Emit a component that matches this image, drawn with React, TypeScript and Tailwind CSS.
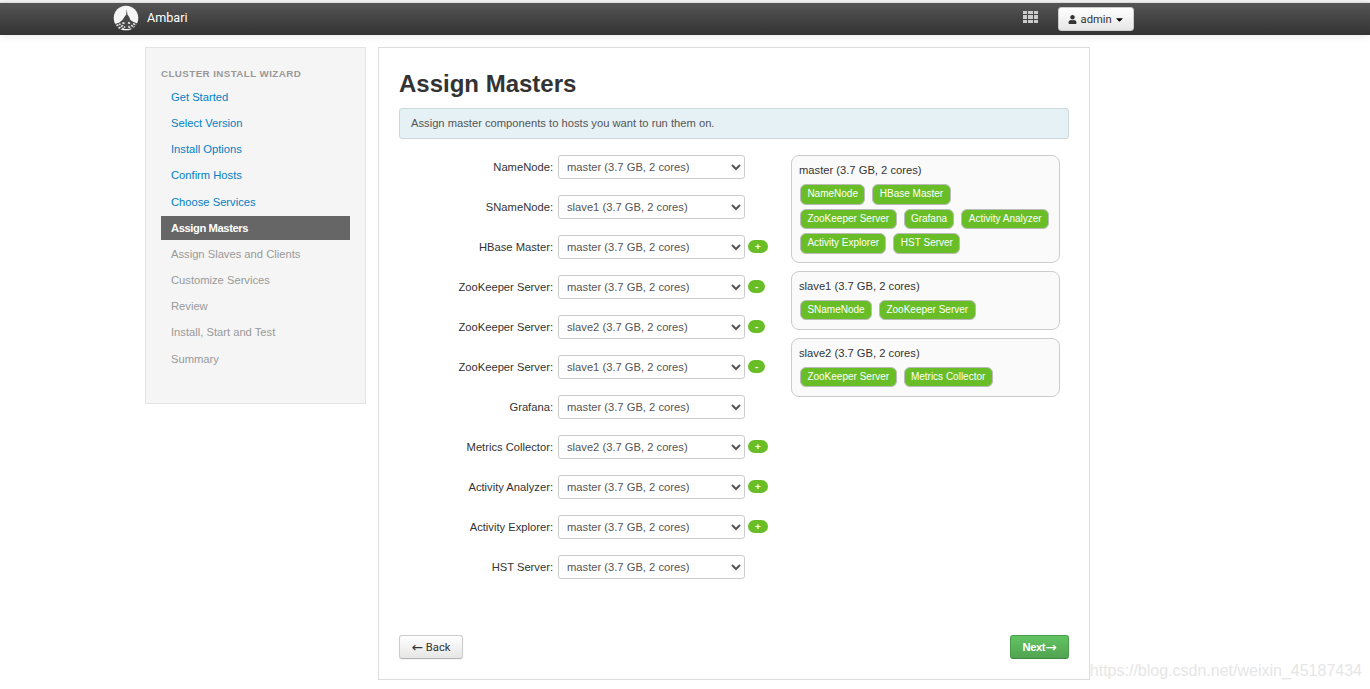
import React, { useState } from "react";
import { FaUser, FaCaretDown } from "react-icons/fa";

interface Step {
  name: string;
  state: "done" | "active" | "disabled";
}

interface MasterRow {
  label: string;
  host: string;
  action?: "+" | "-";
}

interface HostCard {
  host: string;
  components: string[];
}

const steps: Step[] = [
  { name: "Get Started", state: "done" },
  { name: "Select Version", state: "done" },
  { name: "Install Options", state: "done" },
  { name: "Confirm Hosts", state: "done" },
  { name: "Choose Services", state: "done" },
  { name: "Assign Masters", state: "active" },
  { name: "Assign Slaves and Clients", state: "disabled" },
  { name: "Customize Services", state: "disabled" },
  { name: "Review", state: "disabled" },
  { name: "Install, Start and Test", state: "disabled" },
  { name: "Summary", state: "disabled" },
];

const stepStyles = {
  done: "text-[#0080c4]",
  active: "bg-[#666666] font-bold tracking-[-0.4px] text-white",
  disabled: "text-[#999999]",
};

const hosts = ["master", "slave1", "slave2"];

const initialRows: MasterRow[] = [
  { label: "NameNode", host: "master" },
  { label: "SNameNode", host: "slave1" },
  { label: "HBase Master", host: "master", action: "+" },
  { label: "ZooKeeper Server", host: "master", action: "-" },
  { label: "ZooKeeper Server", host: "slave2", action: "-" },
  { label: "ZooKeeper Server", host: "slave1", action: "-" },
  { label: "Grafana", host: "master" },
  { label: "Metrics Collector", host: "slave2", action: "+" },
  { label: "Activity Analyzer", host: "master", action: "+" },
  { label: "Activity Explorer", host: "master", action: "+" },
  { label: "HST Server", host: "master" },
];

const hostCards: HostCard[] = [
  {
    host: "master",
    components: [
      "NameNode",
      "HBase Master",
      "ZooKeeper Server",
      "Grafana",
      "Activity Analyzer",
      "Activity Explorer",
      "HST Server",
    ],
  },
  { host: "slave1", components: ["SNameNode", "ZooKeeper Server"] },
  { host: "slave2", components: ["ZooKeeper Server", "Metrics Collector"] },
];

const hostText = (host: string) => `${host} (3.7 GB, 2 cores)`;

const Logo = () => (
  <svg width="26" height="26" viewBox="0 0 26 26" className="-mt-0.5">
    <circle cx="13" cy="13" r="12.3" fill="#f6f6f6" />
    <path
      d="M13.8 4 L14.4 9.5 L16.2 12 L17.4 15 L20 16.8 L24.4 18.6 A12.7 12.7 0 0 1 20 24 L6 24 A12.7 12.7 0 0 1 1.8 19 L6 17.8 L9.4 15 L11 12.4 L13.2 9.5 Z"
      fill="#484848"
    />
    <path
      d="M3.4 20.6 L7.6 19 M5.6 23.4 L10.4 20 M9.4 17.8 L12 18.6 M15 17.8 L17.6 18.4 M9 24.6 L12 21.6 M15.4 21.4 L18 24 M18 20.4 L21.4 22 M20 18.8 L23 19.6"
      stroke="#eeeeee"
      strokeWidth="1.5"
      strokeDasharray="2.2 0.7"
      fill="none"
    />
  </svg>
);

const Navbar = () => (
  <header className="h-[35px] border-t-2 border-[#f5f5f5] font-['Roboto',sans-serif]">
    <div className="flex h-[33px] items-center border-t border-[#dddddd] bg-linear-to-b from-[#555555] to-[#333333] pl-[113px] shadow-[0_1px_8px_rgba(0,0,0,0.1)]">
      <Logo />
      <span className="-mt-0.5 ml-2 w-[41px] text-[12.6px] text-white">Ambari</span>
      <div className="-mt-1 ml-[835px] grid grid-cols-3 gap-px">
        {Array.from({ length: 9 }, (_, i) => (
          <span key={i} className="h-[3.3px] w-[4.4px] bg-[#cccccc]" />
        ))}
      </div>
      <button className="ml-5 flex h-6 w-[76px] items-center justify-center rounded-[3px] border border-[#cccccc] bg-linear-to-b from-white to-[#e6e6e6] text-[11.2px] text-[#333333]">
        <FaUser className="mr-1 text-[9px]" />
        <span className="pt-0.5">admin</span>
        <FaCaretDown className="ml-0.5 text-[11px] text-black" />
      </button>
    </div>
  </header>
);

const Sidebar = () => (
  <aside className="h-[357px] w-[221px] shrink-0 border border-[#e3e3e3] bg-[#f5f5f5] px-[15px] pt-[17px]">
    <h3 className="h-[19.8px] text-[9.8px] leading-[17px] font-bold tracking-[0.4px] text-[#999999]">
      CLUSTER INSTALL WIZARD
    </h3>
    <ul className="flex flex-col gap-[2.2px]">
      {steps.map((step) => (
        <li
          key={step.name}
          className={`h-6 w-[189px] pl-2.5 leading-6 ${stepStyles[step.state]}`}
        >
          {step.name}
        </li>
      ))}
    </ul>
  </aside>
);

const HostPanel = ({ card }: { card: HostCard }) => (
  <div className="min-h-[59px] rounded-[8px] border border-[#cccccc] bg-[#fafafa] pt-1.5 pr-2 pb-2 pl-[7px]">
    <div className="h-[22px] leading-4">{hostText(card.host)}</div>
    <div className="flex flex-wrap gap-x-[7px] gap-y-1 pl-px">
      {card.components.map((name) => (
        <span
          key={name}
          className="h-[20.5px] rounded-[6px] border border-[#bbbbbb] bg-[#69be28] px-[6.4px] text-[10px] leading-[18px] whitespace-nowrap text-white"
        >
          {name}
        </span>
      ))}
    </div>
  </div>
);

const App = () => {
  const [rows, setRows] = useState(initialRows);

  const changeHost = (index: number, host: string) => {
    setRows(rows.map((row, i) => (i === index ? { ...row, host } : row)));
  };

  return (
    <div className="flow-root h-[689px] overflow-hidden bg-white font-['Liberation_Sans',Arial,sans-serif] text-[11.2px] text-[#333333]">
      <Navbar />
      <div className="mt-3 flex items-start pl-[145px]">
        <Sidebar />

        <main className="ml-3 flex h-[633px] w-[712px] shrink-0 flex-col border border-[#dddddd] px-5 pt-5">
          <h2 className="h-10 text-[24px] leading-8 font-bold">Assign Masters</h2>
          <div className="h-[31px] rounded-[3px] border border-[#cbd8dd] bg-[#e6f1f6] pl-[11px] leading-[29px] text-[#555555]">
            Assign master components to hosts you want to run them on.
          </div>

          <div className="mt-4 flex h-[480px] items-start">
            {/* Component to host assignment */}
            <div className="flex w-[392px] flex-col gap-4">
              {rows.map((row, index) => (
                <div key={index} className="flex h-6 items-center">
                  <label className="w-[154px] text-right">{row.label}:</label>
                  <select
                    value={row.host}
                    onChange={(e) => changeHost(index, e.target.value)}
                    className="ml-[5px] h-6 w-[187px] rounded-[3px] border border-[#cccccc] bg-white px-1 text-[#555555]"
                  >
                    {hosts.map((host) => (
                      <option key={host} value={host}>
                        {hostText(host)}
                      </option>
                    ))}
                  </select>
                  {row.action && (
                    <button className="mb-0.5 ml-[3px] h-[13px] rounded-full bg-[#69be28] px-[7px] text-[9.8px] leading-[13px] font-bold text-white">
                      {row.action}
                    </button>
                  )}
                </div>
              ))}
            </div>

            {/* Hosts overview */}
            <div className="flex w-[269px] flex-col gap-2">
              {hostCards.map((card) => (
                <HostPanel key={card.host} card={card} />
              ))}
            </div>
          </div>

          <div className="flex justify-between">
            <button className="flex h-6 w-16 items-center justify-center gap-[3px] rounded-[3px] border border-[#cccccc] border-b-[#b3b3b3] bg-linear-to-b from-white to-[#e6e6e6] font-['Roboto',sans-serif] shadow-[0_1px_2px_rgba(0,0,0,0.05)]">
              <span className="font-['DejaVu_Sans'] text-[13.5px] leading-4">←</span>
              <span className="pt-0.5">Back</span>
            </button>
            <button className="flex h-6 w-[59px] items-center justify-center rounded-[3px] border border-[#4a9d4a] border-b-[#3d873d] bg-linear-to-b from-[#62c462] to-[#51a351] font-bold text-white">
              <span className="pt-px tracking-[-0.4px]">Next</span>
              <span className="font-['DejaVu_Sans'] text-[13.5px] leading-4 font-normal">→</span>
            </button>
          </div>
        </main>
      </div>
      <div className="absolute right-2 bottom-2 text-[16px] leading-5 text-[#e6e6e6]">
        https://blog.csdn.net/weixin_45187434
      </div>
    </div>
  );
};

export default App;
